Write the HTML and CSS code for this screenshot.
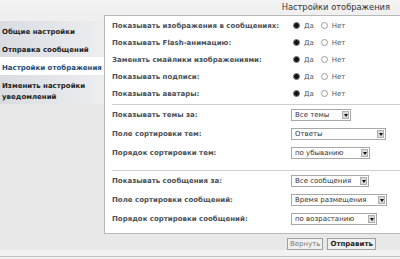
FILE: index.html
```html
<!DOCTYPE html>
<html lang="ru">
<head>
  <meta charset="UTF-8" />
  <title>Настройки отображения</title>
  <link rel="stylesheet" href="styles.css">
</head>
<body>

  <header class="topbar">
    <h1 class="page-title">Настройки отображения</h1>
  </header>

  <div class="layout">
    <ul class="side-nav">
      <li><a href="#">Общие настройки</a></li>
      <li><a href="#">Отправка сообщений</a></li>
      <li class="active"><a href="#">Настройки отображения</a></li>
      <li><a href="#">Изменить настройки уведомлений</a></li>
    </ul>

    <div class="content">
      <form class="panel">
        <div class="group group-yesno">
          <div class="row">
            <label class="row-label">Показывать изображения в сообщениях:</label>
            <div class="row-field">
              <label class="opt"><input type="radio" name="images" checked> Да</label>
              <label class="opt"><input type="radio" name="images"> Нет</label>
            </div>
          </div>
          <div class="row">
            <label class="row-label">Показывать Flash-анимацию:</label>
            <div class="row-field">
              <label class="opt"><input type="radio" name="flash" checked> Да</label>
              <label class="opt"><input type="radio" name="flash"> Нет</label>
            </div>
          </div>
          <div class="row">
            <label class="row-label">Заменять смайлики изображениями:</label>
            <div class="row-field">
              <label class="opt"><input type="radio" name="smilies" checked> Да</label>
              <label class="opt"><input type="radio" name="smilies"> Нет</label>
            </div>
          </div>
          <div class="row">
            <label class="row-label">Показывать подписи:</label>
            <div class="row-field">
              <label class="opt"><input type="radio" name="sigs" checked> Да</label>
              <label class="opt"><input type="radio" name="sigs"> Нет</label>
            </div>
          </div>
          <div class="row">
            <label class="row-label">Показывать аватары:</label>
            <div class="row-field">
              <label class="opt"><input type="radio" name="avatars" checked> Да</label>
              <label class="opt"><input type="radio" name="avatars"> Нет</label>
            </div>
          </div>
        </div>

        <div class="group">
          <div class="row">
            <label class="row-label">Показывать темы за:</label>
            <div class="row-field"><span class="select w-59"><span class="select-text">Все темы</span><span class="select-arrow"></span></span></div>
          </div>
          <div class="row">
            <label class="row-label">Поле сортировки тем:</label>
            <div class="row-field"><span class="select w-94"><span class="select-text">Ответы</span><span class="select-arrow"></span></span></div>
          </div>
          <div class="row">
            <label class="row-label">Порядок сортировки тем:</label>
            <div class="row-field"><span class="select w-78"><span class="select-text">по убыванию</span><span class="select-arrow"></span></span></div>
          </div>
        </div>

        <div class="group">
          <div class="row">
            <label class="row-label">Показывать сообщения за:</label>
            <div class="row-field"><span class="select w-77"><span class="select-text">Все сообщения</span><span class="select-arrow"></span></span></div>
          </div>
          <div class="row">
            <label class="row-label">Поле сортировки сообщений:</label>
            <div class="row-field"><span class="select w-95"><span class="select-text">Время размещения</span><span class="select-arrow"></span></span></div>
          </div>
          <div class="row">
            <label class="row-label">Порядок сортировки сообщений:</label>
            <div class="row-field"><span class="select w-85"><span class="select-text">по возрастанию</span><span class="select-arrow"></span></span></div>
          </div>
        </div>
      </form>

      <div class="actions">
        <button type="reset" class="btn">Вернуть</button>
        <button type="submit" class="btn btn-main">Отправить</button>
      </div>
    </div>
  </div>

  <footer class="bottom-line"></footer>

</body>
</html>
```

FILE: styles.css
```css
body {
  margin: 0;
  font-family: 'DejaVu Sans', Verdana, sans-serif;
  background: linear-gradient(#f2f2f2, #e8e8e8 60px, #e8e8e8);
  color: #333;
  overflow: hidden;
}
.topbar {
  height: 15px;
  padding-right: 10px;
  text-align: right;
}
.page-title {
  margin: 0;
  font-size: 8.3px;
  font-weight: normal;
  line-height: 15px;
  color: #333;
}
.layout {
  display: flex;
  align-items: flex-start;
}
.side-nav {
  list-style: none;
  margin: 6px 0 0 0;
  padding: 0;
  width: 104px;
  flex: none;
  background: linear-gradient(to right, #d8dce1, #e6e8eb 70%, #eceef0);
}
.side-nav li {
  padding: 3.5px 2px;
  line-height: 8px;
}
.side-nav a {
  font-size: 7px;
  font-weight: bold;
  color: #222;
  text-decoration: none;
}
.side-nav li.active {
  background: #fff;
}
.side-nav li.active a {
  color: #1d4b78;
}
.content {
  flex: 1;
  margin-right: -4px;
}
.panel {
  background: #fff;
  border: 1px solid #b8b8b8;
  padding: 1px 0 5px 7px;
}
.group + .group {
  border-top: 1px solid #cfcfcf;
  margin-top: 2px;
}
.group + .group + .group {
  margin-top: 8px;
}
.row {
  display: flex;
  align-items: center;
  height: 19px;
}
.group-yesno .row {
  height: 17px;
}
.row-label {
  width: 179px;
  flex: none;
  font-size: 7px;
  font-weight: bold;
  color: #4c5157;
  white-space: nowrap;
}
.row-field {
  display: flex;
  align-items: center;
  font-size: 7px;
  color: #555;
}
.opt {
  display: flex;
  align-items: center;
  margin-right: 5px;
}
.opt input {
  appearance: none;
  width: 7px;
  height: 7px;
  margin: 0 4px 0 2px;
  border: 1px solid #9a9a9a;
  border-radius: 50%;
  background: #fff;
}
.opt input:checked {
  background: radial-gradient(circle, #111 0 2px, #666 2.5px);
  border-color: #555;
}
.select {
  display: flex;
  align-items: center;
  justify-content: space-between;
  height: 10px;
  padding: 0 1px 0 3px;
  border: 1px solid #a8a8a8;
  background: #fff;
  box-sizing: content-box;
}
.select-text {
  font-size: 7px;
  color: #333;
  line-height: 10px;
}
.select-arrow {
  position: relative;
  width: 7px;
  height: 8px;
  background: #d9d9d9;
  border: 1px solid #b0b0b0;
  box-sizing: border-box;
}
.select-arrow::after {
  content: "";
  position: absolute;
  left: 1px;
  top: 2px;
  border-left: 2px solid transparent;
  border-right: 2px solid transparent;
  border-top: 3px solid #111;
}
.w-59 { width: 54px; }
.w-94 { width: 89px; }
.w-78 { width: 73px; }
.w-77 { width: 72px; }
.w-95 { width: 90px; }
.w-85 { width: 80px; }
.actions {
  display: flex;
  gap: 4px;
  margin-top: 4px;
  padding-left: 183px;
}
.btn {
  height: 12px;
  padding: 0 2px;
  font-family: 'DejaVu Sans', Verdana, sans-serif;
  font-size: 7px;
  line-height: 10px;
  color: #777;
  background: #f0f0f0;
  border: 1px solid #a0a0a0;
  border-radius: 0;
}
.btn-main {
  font-weight: bold;
  color: #222;
}
.bottom-line {
  position: absolute;
  left: 0;
  right: 0;
  top: 256px;
  border-top: 1px solid #c4c4c4;
}
```
